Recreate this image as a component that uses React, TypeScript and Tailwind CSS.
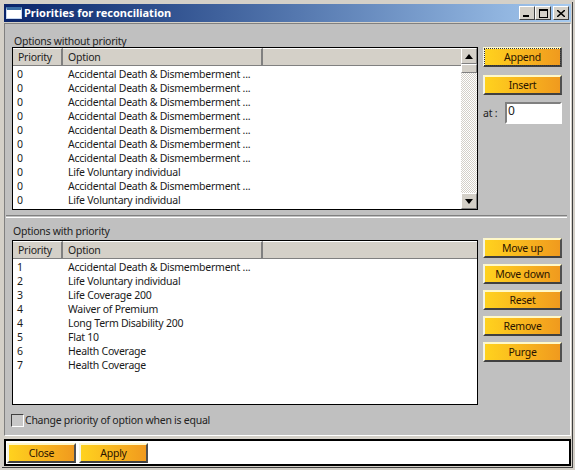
const font = { fontFamily: '"Noto Sans", "Liberation Sans", Arial, sans-serif' };

const without: [string, string][] = [
  ["0", "Accidental Death & Dismemberment ..."],
  ["0", "Accidental Death & Dismemberment ..."],
  ["0", "Accidental Death & Dismemberment ..."],
  ["0", "Accidental Death & Dismemberment ..."],
  ["0", "Accidental Death & Dismemberment ..."],
  ["0", "Accidental Death & Dismemberment ..."],
  ["0", "Accidental Death & Dismemberment ..."],
  ["0", "Life Voluntary individual"],
  ["0", "Accidental Death & Dismemberment ..."],
  ["0", "Life Voluntary individual"],
];
const withP: [string, string][] = [
  ["1", "Accidental Death & Dismemberment ..."],
  ["2", "Life Voluntary individual"],
  ["3", "Life Coverage 200"],
  ["4", "Waiver of Premium"],
  ["4", "Long Term Disability 200"],
  ["5", "Flat 10"],
  ["6", "Health Coverage"],
  ["7", "Health Coverage"],
];

function GoldButton({ label, w = "w-[79px]", focus = false }: { label: string; w?: string; focus?: boolean }) {
  return (
    <button
      className={`${w} h-[20px] pt-[1px] flex items-center justify-center border-t-2 border-l-2 border-t-[#fff8c8] border-l-[#f4f4e4] border-b-2 border-r-2 border-b-[#404040] border-r-[#505050] bg-gradient-to-r from-[#ffd21e] to-[#f09a1e] text-[10.5px] tracking-[-0.25px] text-[#2a1400] leading-none ${focus ? "outline-1 outline-dotted outline-[#333] -outline-offset-2" : ""}`}
    >
      {label}
    </button>
  );
}

function HeaderCell({ label, className }: { label: string; className: string }) {
  return (
    <div className={`${className} h-[18px] pt-[1px] flex items-center pl-[5px] bg-[#d4d0c8] border-r-2 border-r-[#808080] border-b border-b-[#808080] border-t border-t-white text-[10.5px] tracking-[-0.25px] text-[#222]`}>
      {label}
    </div>
  );
}

function Rows({ rows }: { rows: [string, string][] }) {
  return (
    <div className="pt-[2px]">
      {rows.map(([p, o], i) => (
        <div key={i} className="flex h-[14px] items-center text-[10.5px] tracking-[-0.25px] text-[#1a1a1a] whitespace-nowrap">
          <div className="w-[55px] pl-[4px]">{p}</div>
          <div>{o}</div>
        </div>
      ))}
    </div>
  );
}

function Arrow({ up }: { up: boolean }) {
  return (
    <div className="h-[16px] w-[16px] flex items-center justify-center bg-[#d4d0c8] border-t border-l border-t-white border-l-white border-b border-r border-b-[#808080] border-r-[#808080]">
      <svg width="8" height="5" viewBox="0 0 8 5">
        <path d={up ? "M4 0L8 5H0Z" : "M0 0H8L4 5Z"} fill="#000" />
      </svg>
    </div>
  );
}

function Table({ rows, h, scroll }: { rows: [string, string][]; h: string; scroll: boolean }) {
  return (
    <div className={`${h} w-[466px] bg-white border border-black flex overflow-hidden`}>
      <div className="flex-1 min-w-0">
        <div className="flex bg-[#d4d0c8]">
          <HeaderCell label="Priority" className="w-[50px]" />
          <HeaderCell label="Option" className="w-[200px]" />
          <div className="flex-1 h-[18px] border-b border-b-[#808080] border-t border-t-white" />
        </div>
        <Rows rows={rows} />
      </div>
      {scroll && (
        <div className="w-[16px] flex flex-col bg-[repeating-conic-gradient(#d4d0c8_0%_25%,#ffffff_0%_50%)] bg-[length:2px_2px]">
          <Arrow up />
          <div className="h-[9px] bg-[#d4d0c8] border-t border-l border-t-white border-l-white border-b border-r border-b-[#808080] border-r-[#808080]" />
          <div className="flex-1" />
          <Arrow up={false} />
        </div>
      )}
    </div>
  );
}

function TitleBtn({ children, ml = "" }: { children: React.ReactNode; ml?: string }) {
  return (
    <div className={`${ml} w-[16px] h-[14px] flex items-center justify-center bg-[#d4d0c8] border-t border-l border-t-white border-l-white border-b border-r border-b-[#404040] border-r-[#404040]`}>
      {children}
    </div>
  );
}

export default function App() {
  return (
    <div style={font} className="w-[575px] h-[470px] bg-[#d4d0c8] border-2 border-[#d4d0c8] overflow-hidden">
      <div className="w-full h-full border-r border-b border-r-[#404040] border-b-[#404040] pl-[2px] pt-[2px] pr-[1px] pb-[1px] flex flex-col">
        {/* title bar */}
        <div className="h-[18px] shrink-0 flex items-center bg-gradient-to-r from-[#0a246a] to-[#a6caf0] pl-[2px] pr-[2px]">
          <div className="w-[16px] h-[12px] bg-white border-t-[3px] border-t-[#3a6ea5] border border-[#c8d8f0]" />
          <span className="ml-[2px] text-[11px] font-bold text-white whitespace-nowrap">Priorities for reconciliation</span>
          <div className="ml-auto flex items-center">
            <TitleBtn>
              <div className="w-[6px] h-[2px] bg-black mt-[6px] mr-[2px]" />
            </TitleBtn>
            <TitleBtn>
              <div className="w-[9px] h-[9px] border border-black border-t-2" />
            </TitleBtn>
            <TitleBtn ml="ml-[2px]">
              <svg width="8" height="7" viewBox="0 0 8 7">
                <path d="M0 0L8 7M8 0L0 7" stroke="#000" strokeWidth="1.5" />
              </svg>
            </TitleBtn>
          </div>
        </div>

        {/* main panel */}
        <div className="h-[413px] shrink-0 mt-[1px] bg-[#c0c0c0] border-t border-l border-t-[#808080] border-l-[#808080] border-r border-b border-r-white border-b-white pl-[7px] pr-[7px] flex flex-col">
          <div className="h-[23px] shrink-0 flex items-end text-[10.5px] tracking-[-0.25px] text-[#222] leading-none pl-[2px] pb-[1px]">Options without priority</div>
          <div className="flex gap-[5px]">
            <Table rows={without} h="h-[163px]" scroll />
            <div className="flex flex-col">
              <GoldButton label="Append" focus />
              <div className="mt-[8px]">
                <GoldButton label="Insert" />
              </div>
              <div className="mt-[7px] flex items-center h-[22px] text-[10.5px] tracking-[-0.25px] text-[#222]">
                <span className="w-[22px] pt-[1px]">at :</span>
                <div className="w-[57px] h-[22px] bg-white border-2 border-t-[#808080] border-l-[#808080] border-r-white border-b-white pl-[1px] leading-[14px] text-[12px]">0</div>
              </div>
            </div>
          </div>

          <div className="-ml-[6px] mt-[5px] w-[561px] border-t border-b border-t-[#808080] border-b-white h-[3px] shrink-0" />

          <div className="h-[18px] shrink-0 flex items-end text-[10.5px] tracking-[-0.25px] text-[#222] leading-none pl-[1px]">Options with priority</div>
          <div className="flex gap-[5px] mt-[4px]">
            <Table rows={withP} h="h-[165px]" scroll={false} />
            <div className="flex flex-col gap-[6px] -mt-[2px]">
              <GoldButton label="Move up" />
              <GoldButton label="Move down" />
              <GoldButton label="Reset" />
              <GoldButton label="Remove" />
              <GoldButton label="Purge" />
            </div>
          </div>

          <div className="flex items-center mt-[7px] text-[10.5px] tracking-[-0.25px] text-[#222] -ml-[1px]">
            <div className="w-[13px] h-[13px] border border-t-[#404040] border-l-[#404040] border-r-white border-b-white bg-[#c8c8c8]" />
            <span className="ml-[1px] pt-[1px]">Change priority of option when is equal</span>
          </div>
        </div>

        {/* bottom bar */}
        <div className="mt-[3px] h-[27px] shrink-0 bg-white border-2 border-black flex items-center pl-[1px] gap-[3px]">
          <GoldButton label="Close" w="w-[69px]" />
          <GoldButton label="Apply" w="w-[69px]" />
        </div>
      </div>
    </div>
  );
}
